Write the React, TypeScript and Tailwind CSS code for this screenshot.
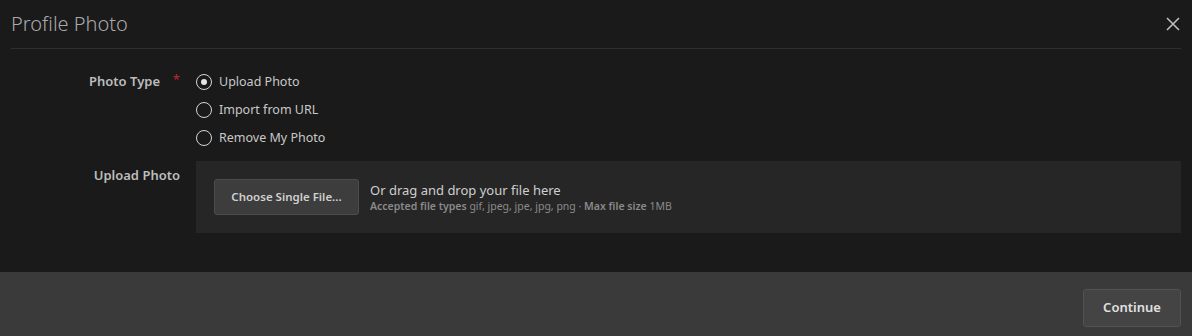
import React, { useState } from 'react';

const font = { fontFamily: '"Segoe UI", "Noto Sans", "Open Sans", sans-serif' };

const options = ['Upload Photo', 'Import from URL', 'Remove My Photo'];

const Radio: React.FC<{ checked: boolean; label: string; onClick: () => void }> = ({ checked, label, onClick }) => (
  <button type="button" onClick={onClick} className="flex items-center h-[28px] text-left">
    <span className="w-[16px] h-[16px] rounded-full border-[1.5px] border-[#d6d6d6] flex items-center justify-center">
      {checked && <span className="w-[6px] h-[6px] rounded-full bg-[#e6e6e6]" />}
    </span>
    <span className="ml-[7px] text-[12.5px] text-[#c8c8c8]">{label}</span>
  </button>
);

const App: React.FC = () => {
  const [type, setType] = useState('Upload Photo');

  return (
    <div className="w-[1192px] h-[336px] bg-[#1a1a1a] flex flex-col" style={font}>
      <div className="mx-[11px] h-[49px] border-b border-[#2f2f2f] flex items-center justify-between">
        <h1 className="text-[20px] font-light text-[#a9a9a9]">Profile Photo</h1>
        <button type="button" className="text-[#bdbdbd] mr-[1px]">
          <svg width="14" height="14" viewBox="0 0 14 14" stroke="currentColor" strokeWidth="1.6">
            <path d="M1 1 L13 13 M13 1 L1 13" />
          </svg>
        </button>
      </div>

      <div className="flex-1 pt-[19px]">
        <div className="flex">
          <div className="w-[180px] flex justify-end pt-[4px]">
            <span className="text-[13px] font-semibold text-[#bdbdbd]">Photo Type</span>
            <span className="w-[20px] text-right text-[#c0272d] text-[13px] leading-[14px]">*</span>
          </div>
          <div className="ml-[16px] flex flex-col">
            {options.map((o) => (
              <Radio key={o} label={o} checked={type === o} onClick={() => setType(o)} />
            ))}
          </div>
        </div>

        <div className="flex mt-[9px] mr-[11px]">
          <div className="w-[180px] flex justify-end pt-[5px]">
            <span className="text-[13px] font-semibold text-[#bdbdbd]">Upload Photo</span>
          </div>
          <div className="ml-[16px] flex-1 h-[72px] bg-[#262626] flex items-center px-[18px]">
            <button
              type="button"
              className="w-[145px] h-[36px] bg-[#3d3d3d] border border-[#4c4c4c] rounded-[3px] text-[11.5px] font-semibold text-[#d0d0d0]"
            >
              Choose Single File...
            </button>
            <div className="ml-[11px] flex flex-col">
              <span className="text-[13px] text-[#cfcfcf] leading-[18px]">Or drag and drop your file here</span>
              <span className="text-[10.5px] text-[#8a8a8a] leading-[15px]">
                <b className="font-semibold">Accepted file types</b> gif, jpeg, jpe, jpg, png · <b className="font-semibold">Max file size</b> 1MB
              </span>
            </div>
          </div>
        </div>
      </div>

      <div className="h-[64px] bg-[#3a3a3a] flex items-start justify-end pt-[17px] pr-[11px]">
        <button
          type="button"
          className="w-[98px] h-[38px] bg-[#444444] border border-[#525252] rounded-[3px] text-[13px] font-semibold text-[#e0e0e0]"
        >
          Continue
        </button>
      </div>
    </div>
  );
};

export default App;
